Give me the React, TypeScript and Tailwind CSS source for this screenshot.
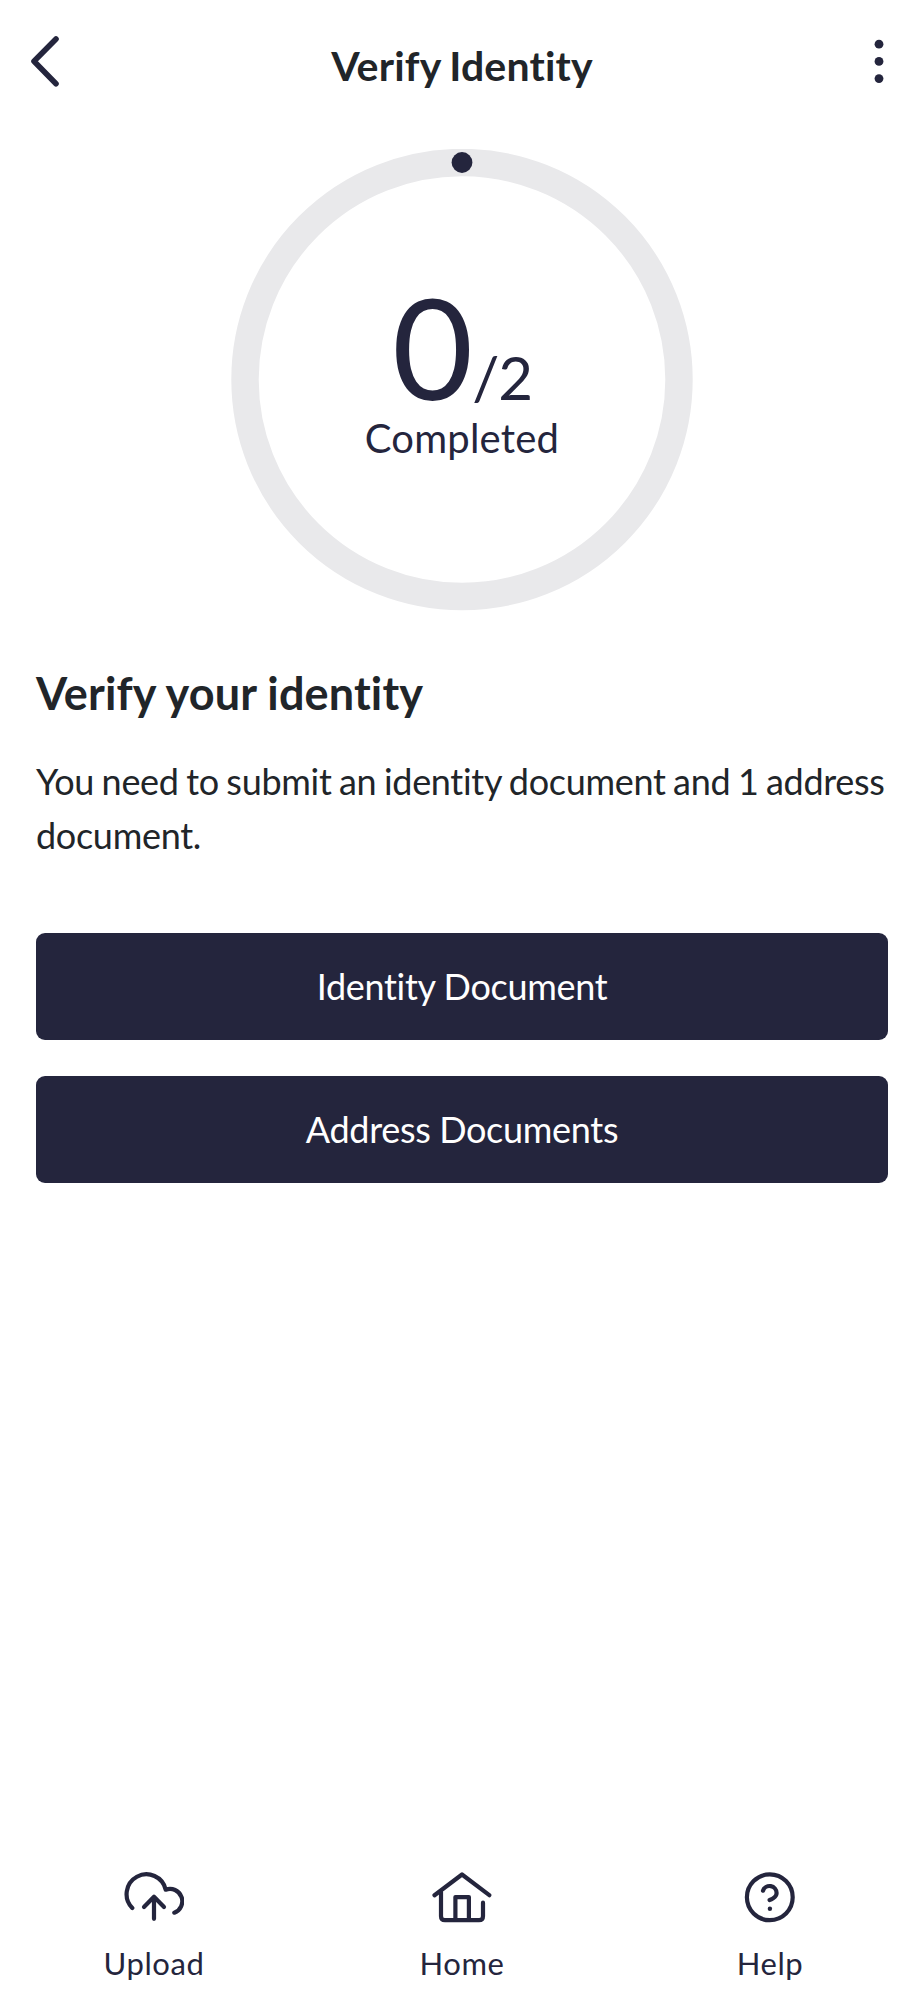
import React from "react";

const INK = "#24253d";

const UploadIcon = () => (
  <svg width="60" height="60" viewBox="0 0 60 60" fill="none" stroke={INK} strokeWidth="4.2" strokeLinecap="round" strokeLinejoin="round">
    <path d="M8.3 40A19.8 19.8 0 1 1 41.7 21.7A12.2 12.2 0 0 1 50.3 44.7" />
    <path d="M30 50.8V28.8M20 39L30 28.8L40 39" />
  </svg>
);

const HomeIcon = () => (
  <svg width="60" height="60" viewBox="0 0 60 60" fill="none" stroke={INK} strokeWidth="4.2" strokeLinecap="round" strokeLinejoin="round">
    <path d="M2.5 27.2L30 6.5L57.3 27.2" />
    <path d="M9 24V48.2Q9 52.2 13 52.2H47Q51 52.2 51 48.2V34.7" />
    <path d="M23.4 52V29.1H36.9V52" />
  </svg>
);

const HelpIcon = () => (
  <svg width="60" height="60" viewBox="0 0 60 60" fill="none" stroke={INK} strokeWidth="4.2" strokeLinecap="round" strokeLinejoin="round">
    <circle cx="29.8" cy="29.3" r="22.9" />
    <path d="M23 22.7a7 7 0 0 1 13.6 2.3c0 4.6-7 7-7 7" />
    <circle cx="29.9" cy="40.7" r="2.2" fill={INK} stroke="none" />
  </svg>
);

const documents = ["Identity Document", "Address Documents"];

const navItems = [
  { label: "Upload", icon: <UploadIcon /> },
  { label: "Home", icon: <HomeIcon /> },
  { label: "Help", icon: <HelpIcon /> },
];

const Header: React.FC = () => (
  <header className="h-[149px] px-[27px] pt-[31px] flex items-start justify-between">
    <button aria-label="Back" className="w-[60px]">
      <svg width="60" height="60" viewBox="0 0 60 60" fill="none" stroke={INK} strokeWidth="5.6" strokeLinecap="round" strokeLinejoin="round">
        <path d="M29 8L7 30.3L29 52.7" />
      </svg>
    </button>
    <h1 className="pt-[10px] text-[41px] leading-[50px] font-bold tracking-[0.2px] [word-spacing:-1.5px] text-[#212529]">Verify Identity</h1>
    <button aria-label="More" className="w-[60px]">
      <svg width="60" height="60" viewBox="0 0 60 60" fill={INK}>
        <circle cx="42" cy="13.2" r="4.4" />
        <circle cx="42" cy="30.4" r="4.4" />
        <circle cx="42" cy="47.6" r="4.4" />
      </svg>
    </button>
  </header>
);

const ProgressRing: React.FC<{ done: number; total: number }> = ({ done, total }) => (
  <div className="mx-auto w-[462px] h-[462px] grid grid-cols-1 grid-rows-1">
    <svg className="col-start-1 row-start-1" width="462" height="462" viewBox="0 0 462 462">
      <circle cx="231" cy="230.5" r="217" fill="none" stroke="#e9e9eb" strokeWidth="27.4" />
      <circle cx="231" cy="13.5" r="10.4" fill={INK} />
    </svg>
    <div className="col-start-1 row-start-1 pt-[147px] flex flex-col items-center text-[#24253d]">
      <div className="flex items-baseline leading-[100px] h-[100px]">
        <span className="text-[140px]">{done}</span>
        <span className="text-[60px] leading-[60px] tracking-[-1px] -ml-[1px]">/{total}</span>
      </div>
      <p className="text-[40px] leading-[48px] mt-[18px] tracking-[0.2px]">Completed</p>
    </div>
  </div>
);

const App: React.FC = () => {
  return (
    <div className="min-h-[2000px] bg-white flex flex-col font-['Lato',sans-serif] [font-variant-ligatures:none]">
      <Header />
      <ProgressRing done={0} total={2} />

      <main className="px-9 pt-[55px] flex-1 text-[#212529]">
        <h2 className="text-[45px] leading-[54px] font-bold tracking-[0.15px]">Verify your identity</h2>
        <p className="mt-[34px] text-[36px] leading-[54px] tracking-[-0.3px] [word-spacing:-1.4px]">
          You need to submit an identity document and 1 address document.
        </p>
        <div className="mt-[71px] flex flex-col gap-9">
          {documents.map((name) => (
            <button key={name} className="h-[107px] pb-[2px] rounded-[9px] bg-[#24253d] text-white text-[36px] leading-[54px] tracking-[-0.3px] [word-spacing:-0.3px]">
              {name}
            </button>
          ))}
        </div>
      </main>

      <nav className="h-[132px] grid grid-cols-3 text-[#24253d]">
        {navItems.map((item) => (
          <a key={item.label} className="flex flex-col items-center">
            {item.icon}
            <span className="mt-[15px] text-[31px] leading-[40px] tracking-[0.6px]">{item.label}</span>
          </a>
        ))}
      </nav>
    </div>
  );
};

export default App;
